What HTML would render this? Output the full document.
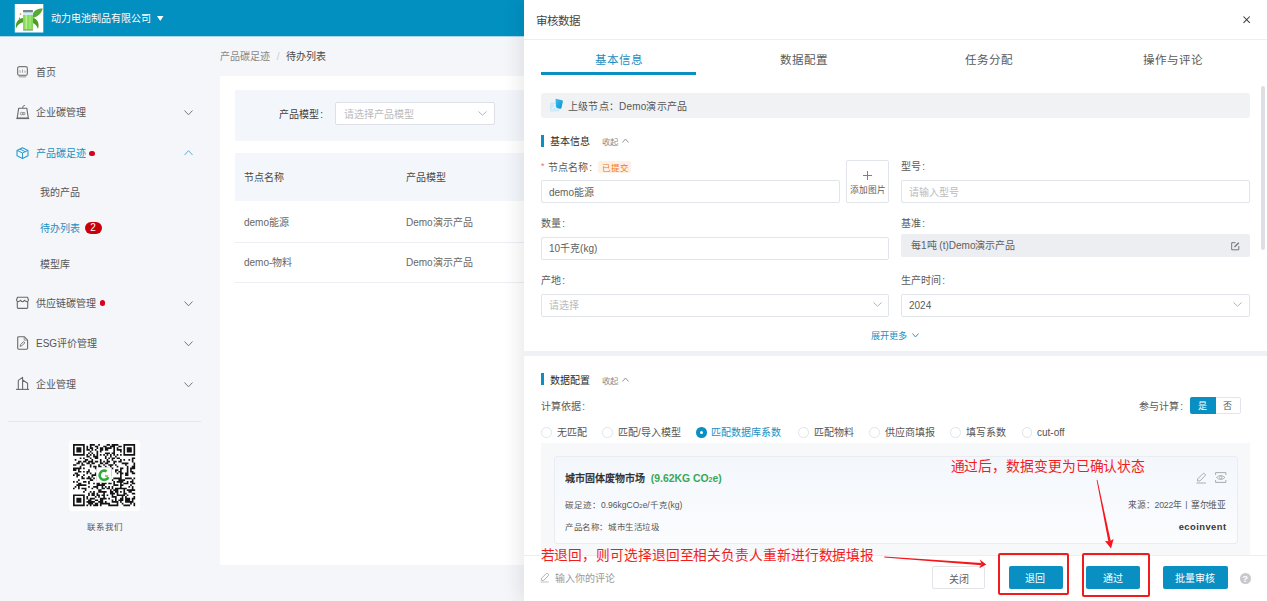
<!DOCTYPE html>
<html lang="zh-CN"><head><meta charset="utf-8">
<style>
*{margin:0;padding:0;box-sizing:border-box}
html,body{width:1267px;height:601px;overflow:hidden;background:#f5f6f9;font-family:"Liberation Sans",sans-serif;color:#333}
.a{position:absolute}
.t{position:absolute;white-space:nowrap;line-height:1;margin-top:1px}
svg{position:absolute;overflow:visible}
</style></head><body>
<!-- header -->
<div class="a" style="left:0;top:0;width:1267px;height:36px;background:#0290c1"></div><div class="a" style="left:0;top:36px;width:1267px;height:1px;background:rgba(2,144,193,0.3)"></div>

<div class="t" style="left:51px;top:13px;font-size:10px;color:#fff">动力电池制品有限公司</div>

<!-- sidebar -->
<div class="t" style="left:36px;top:67px;font-size:10px;color:#555">首页</div>
<div class="t" style="left:36px;top:107px;font-size:10px;color:#555">企业碳管理</div>
<div class="t" style="left:36px;top:148px;font-size:10px;color:#1a8fbf">产品碳足迹</div>
<div class="t" style="left:40px;top:187px;font-size:10px;color:#555">我的产品</div>
<div class="t" style="left:40px;top:223px;font-size:10px;color:#1a8fbf">待办列表</div>
<div class="t" style="left:40px;top:259px;font-size:10px;color:#555">模型库</div>
<div class="t" style="left:36px;top:298px;font-size:10px;color:#555">供应链碳管理</div>
<div class="t" style="left:36px;top:338px;font-size:10px;color:#555">ESG评价管理</div>
<div class="t" style="left:36px;top:379px;font-size:10px;color:#555">企业管理</div>
<div class="a" style="left:8px;top:421px;width:193px;height:1px;background:#e4e6ea"></div>
<div class="a" style="left:69px;top:440px;width:71px;height:71px;background:#fff;border-radius:3px"></div>
<div class="t" style="left:87px;top:522px;font-size:8.5px;color:#555">联系我们</div>

<!-- main -->
<div class="t" style="left:220px;top:51px;font-size:10px;color:#888">产品碳足迹 <span style="color:#ccc;margin:0 4px">/</span> <span style="color:#4a4a4a">待办列表</span></div>
<div class="a" style="left:220px;top:76px;width:304px;height:489px;background:#fff"></div>
<div class="a" style="left:235px;top:90px;width:289px;height:51px;background:#f3f6fb"></div>
<div class="t" style="left:279px;top:109px;font-size:10px;color:#404040">产品模型<span style="margin-left:1.2px">:</span></div>
<div class="a" style="left:335px;top:102px;width:160px;height:23px;background:#fff;border:1px solid #dde0e6;border-radius:2px"></div>
<div class="t" style="left:344px;top:109px;font-size:10px;color:#bbb">请选择产品模型</div>
<div class="a" style="left:235px;top:153px;width:289px;height:48px;background:#f3f6fb"></div>
<div class="t" style="left:244px;top:172px;font-size:10px;color:#4a4a4a">节点名称</div>
<div class="t" style="left:406px;top:172px;font-size:10px;color:#4a4a4a">产品模型</div>
<div class="t" style="left:244px;top:217px;font-size:10px;color:#666">demo能源</div>
<div class="t" style="left:406px;top:217px;font-size:10px;color:#666">Demo演示产品</div>
<div class="a" style="left:235px;top:242px;width:289px;height:1px;background:#ebeef2"></div>
<div class="t" style="left:244px;top:257px;font-size:10px;color:#666">demo-物料</div>
<div class="t" style="left:406px;top:257px;font-size:10px;color:#666">Demo演示产品</div>
<div class="a" style="left:235px;top:282px;width:289px;height:1px;background:#ebeef2"></div>


<!-- icons -->
<svg style="left:14px;top:4px" width="30" height="29" viewBox="0 0 30 29">
<rect x="0.8" y="0" width="28.5" height="28.5" fill="#fff"/>
<path d="M18.5 11.5 C19.5 6 24 4.5 28.8 4.5 C27.5 9.5 23.5 13 18.5 14Z" fill="#58a935"/>
<path d="M2 24.5 C1 18.5 4.5 14 9.5 14 L9.5 18.5 C6 18.5 3.5 21 2 24.5Z" fill="#4c9a2a"/>
<path d="M18.5 14 C23 14.5 26 19 24 25 C23 21.5 21 19.5 18.5 19Z" fill="#4c9a2a"/>
<rect x="9" y="6.5" width="10" height="20" rx="1" fill="#86dc5a"/>
<rect x="9" y="8" width="10" height="3" fill="#cfeef5"/>
<rect x="11.5" y="11" width="1.6" height="15" fill="#b9f08f"/>
<rect x="15.5" y="11" width="1.2" height="15" fill="#a8e67f"/>
<rect x="9" y="6" width="10" height="2.2" rx="0.8" fill="#7d8387"/>
<rect x="9" y="25" width="10" height="1.6" rx="0.6" fill="#9aa0a4"/>
<circle cx="6.5" cy="10" r="0.9" fill="#f3a552"/>
<circle cx="5.5" cy="14.3" r="0.7" fill="#e35a5a"/>
</svg>
<svg style="left:157px;top:16px" width="6.5" height="5"><path d="M0 0H6.5L3.25 5Z" fill="#fff"/></svg>

<!-- sidebar icons -->
<svg style="left:17px;top:66px" width="11" height="12" viewBox="0 0 11 12"><rect x="0.6" y="0.6" width="9.8" height="8.8" rx="1.8" fill="none" stroke="#7a7a7a" stroke-width="1.2"/><path d="M1.5 9.8H9.5L9 11.6H2Z" fill="#b5b5b5"/><path d="M3 4.2v2.6M5.5 3.6v3.2M8 4.6v2.2" stroke="#999" stroke-width="0.9"/></svg>
<svg style="left:16px;top:104px" width="14" height="16" viewBox="0 0 14 16"><path d="M2.7 4.2H10.8L12.3 14H1.2Z" fill="none" stroke="#6a6a6a" stroke-width="1.1" stroke-linejoin="round"/><path d="M0.3 14.5H13.2" stroke="#6a6a6a" stroke-width="1.2"/><path d="M6.8 4.2V2.4L8.9 1.3" fill="none" stroke="#6a6a6a" stroke-width="0.9"/><circle cx="5.6" cy="9.6" r="1.3" fill="none" stroke="#777" stroke-width="0.8"/><circle cx="7.9" cy="9.6" r="1.2" fill="none" stroke="#777" stroke-width="0.8"/></svg>
<svg style="left:16px;top:147px" width="13" height="12" viewBox="0 0 13 12"><path d="M6.5 0.7L12 3.4V8.8L6.5 11.4L1 8.8V3.4Z" fill="none" stroke="#2a9bd0" stroke-width="1.1" stroke-linejoin="round"/><path d="M1 3.4L6.5 6L12 3.4M6.5 6V11.4M3.8 2L9.3 4.7" fill="none" stroke="#2a9bd0" stroke-width="1"/></svg>
<svg style="left:13px;top:293px" width="20" height="20" viewBox="0 0 20 20"><path d="M3.4 7.2L4.5 4.3H14.5L15.6 7.2" fill="none" stroke="#6a6a6a" stroke-width="1.1" stroke-linejoin="round"/><path d="M3.4 7.2Q4.8 10 7.5 7.4Q9.5 10 11.5 7.4Q14.2 10 15.6 7.2" fill="none" stroke="#6a6a6a" stroke-width="1.1"/><path d="M4.3 8.8V14.6Q4.3 15.4 5.1 15.4H13.9Q14.7 15.4 14.7 14.6V8.8" fill="none" stroke="#6a6a6a" stroke-width="1.1"/></svg>
<svg style="left:13px;top:333px" width="20" height="20" viewBox="0 0 20 20"><path d="M4.7 4.6Q4.7 3.7 5.6 3.7H11.2L14.6 7.1V15.3Q14.6 16.2 13.7 16.2H5.6Q4.7 16.2 4.7 15.3Z" fill="none" stroke="#6a6a6a" stroke-width="1.1" stroke-linejoin="round"/><path d="M11.2 3.9V7.1H14.4" fill="none" stroke="#888" stroke-width="0.9"/><path d="M7.2 13.3L7.6 11.6L10.6 8.6L11.8 9.8L8.8 12.8Z" fill="none" stroke="#6a6a6a" stroke-width="0.9" stroke-linejoin="round"/></svg>
<svg style="left:13px;top:373px" width="20" height="20" viewBox="0 0 20 20"><path d="M3 16.4H16" stroke="#6a6a6a" stroke-width="1.1"/><path d="M5.3 16.2V7.4L9.6 4.4V16.2M9.6 7L14.6 10.2V16.2" fill="none" stroke="#6a6a6a" stroke-width="1.1" stroke-linejoin="round"/></svg>
<!-- chevrons -->
<svg style="left:183.5px;top:110px" width="9" height="5.5"><path d="M0.5 0.5L4.5 4.8L8.5 0.5" fill="none" stroke="#777" stroke-width="1"/></svg>
<svg style="left:183.5px;top:150px" width="9" height="5.5"><path d="M0.5 5L4.5 0.7L8.5 5" fill="none" stroke="#5aaed6" stroke-width="1"/></svg>
<svg style="left:183.5px;top:300.5px" width="9" height="5.5"><path d="M0.5 0.5L4.5 4.8L8.5 0.5" fill="none" stroke="#777" stroke-width="1"/></svg>
<svg style="left:183.5px;top:341px" width="9" height="5.5"><path d="M0.5 0.5L4.5 4.8L8.5 0.5" fill="none" stroke="#777" stroke-width="1"/></svg>
<svg style="left:183.5px;top:382px" width="9" height="5.5"><path d="M0.5 0.5L4.5 4.8L8.5 0.5" fill="none" stroke="#777" stroke-width="1"/></svg>
<div class="a" style="left:89px;top:150.5px;width:5.5px;height:5.5px;border-radius:50%;background:#d9001b"></div>
<div class="a" style="left:99.5px;top:300px;width:5.5px;height:5.5px;border-radius:50%;background:#d9001b"></div>
<div class="a" style="left:84.5px;top:221.5px;width:17.5px;height:12px;border-radius:6px;background:#c8000a"></div>
<div class="t" style="left:90.3px;top:222.3px;font-size:10px;color:#fff">2</div>
<svg style="left:73.2px;top:444.2px" width="63" height="63"><path d="M0.00 0.00h11.76v1.68h-11.76zM16.80 0.00h5.04v1.68h-5.04zM25.20 0.00h1.68v1.68h-1.68zM33.60 0.00h3.36v1.68h-3.36zM38.64 0.00h6.72v1.68h-6.72zM50.40 0.00h11.76v1.68h-11.76zM0.00 1.68h1.68v1.68h-1.68zM10.08 1.68h1.68v1.68h-1.68zM13.44 1.68h1.68v1.68h-1.68zM16.80 1.68h1.68v1.68h-1.68zM21.84 1.68h3.36v1.68h-3.36zM30.24 1.68h3.36v1.68h-3.36zM36.96 1.68h5.04v1.68h-5.04zM45.36 1.68h3.36v1.68h-3.36zM50.40 1.68h1.68v1.68h-1.68zM60.48 1.68h1.68v1.68h-1.68zM0.00 3.36h1.68v1.68h-1.68zM3.36 3.36h5.04v1.68h-5.04zM10.08 3.36h1.68v1.68h-1.68zM13.44 3.36h1.68v1.68h-1.68zM16.80 3.36h3.36v1.68h-3.36zM23.52 3.36h1.68v1.68h-1.68zM26.88 3.36h3.36v1.68h-3.36zM31.92 3.36h6.72v1.68h-6.72zM40.32 3.36h1.68v1.68h-1.68zM43.68 3.36h1.68v1.68h-1.68zM50.40 3.36h1.68v1.68h-1.68zM53.76 3.36h5.04v1.68h-5.04zM60.48 3.36h1.68v1.68h-1.68zM0.00 5.04h1.68v1.68h-1.68zM3.36 5.04h5.04v1.68h-5.04zM10.08 5.04h1.68v1.68h-1.68zM13.44 5.04h3.36v1.68h-3.36zM18.48 5.04h1.68v1.68h-1.68zM21.84 5.04h1.68v1.68h-1.68zM26.88 5.04h3.36v1.68h-3.36zM31.92 5.04h3.36v1.68h-3.36zM40.32 5.04h1.68v1.68h-1.68zM43.68 5.04h5.04v1.68h-5.04zM50.40 5.04h1.68v1.68h-1.68zM53.76 5.04h5.04v1.68h-5.04zM60.48 5.04h1.68v1.68h-1.68zM0.00 6.72h1.68v1.68h-1.68zM3.36 6.72h5.04v1.68h-5.04zM10.08 6.72h1.68v1.68h-1.68zM16.80 6.72h1.68v1.68h-1.68zM23.52 6.72h1.68v1.68h-1.68zM26.88 6.72h1.68v1.68h-1.68zM40.32 6.72h1.68v1.68h-1.68zM47.04 6.72h1.68v1.68h-1.68zM50.40 6.72h1.68v1.68h-1.68zM53.76 6.72h5.04v1.68h-5.04zM60.48 6.72h1.68v1.68h-1.68zM0.00 8.40h1.68v1.68h-1.68zM10.08 8.40h1.68v1.68h-1.68zM15.12 8.40h1.68v1.68h-1.68zM18.48 8.40h1.68v1.68h-1.68zM23.52 8.40h1.68v1.68h-1.68zM31.92 8.40h5.04v1.68h-5.04zM38.64 8.40h3.36v1.68h-3.36zM50.40 8.40h1.68v1.68h-1.68zM60.48 8.40h1.68v1.68h-1.68zM0.00 10.08h11.76v1.68h-11.76zM13.44 10.08h1.68v1.68h-1.68zM16.80 10.08h1.68v1.68h-1.68zM20.16 10.08h1.68v1.68h-1.68zM23.52 10.08h1.68v1.68h-1.68zM26.88 10.08h1.68v1.68h-1.68zM30.24 10.08h1.68v1.68h-1.68zM33.60 10.08h1.68v1.68h-1.68zM36.96 10.08h1.68v1.68h-1.68zM40.32 10.08h1.68v1.68h-1.68zM43.68 10.08h1.68v1.68h-1.68zM47.04 10.08h1.68v1.68h-1.68zM50.40 10.08h11.76v1.68h-11.76zM13.44 11.76h3.36v1.68h-3.36zM20.16 11.76h5.04v1.68h-5.04zM31.92 11.76h1.68v1.68h-1.68zM36.96 11.76h1.68v1.68h-1.68zM42.00 11.76h1.68v1.68h-1.68zM6.72 13.44h1.68v1.68h-1.68zM10.08 13.44h1.68v1.68h-1.68zM16.80 13.44h1.68v1.68h-1.68zM21.84 13.44h3.36v1.68h-3.36zM31.92 13.44h1.68v1.68h-1.68zM35.28 13.44h1.68v1.68h-1.68zM38.64 13.44h3.36v1.68h-3.36zM43.68 13.44h3.36v1.68h-3.36zM58.80 13.44h3.36v1.68h-3.36zM1.68 15.12h1.68v1.68h-1.68zM11.76 15.12h3.36v1.68h-3.36zM18.48 15.12h1.68v1.68h-1.68zM26.88 15.12h1.68v1.68h-1.68zM33.60 15.12h1.68v1.68h-1.68zM38.64 15.12h1.68v1.68h-1.68zM47.04 15.12h1.68v1.68h-1.68zM50.40 15.12h1.68v1.68h-1.68zM55.44 15.12h1.68v1.68h-1.68zM58.80 15.12h1.68v1.68h-1.68zM5.04 16.80h3.36v1.68h-3.36zM10.08 16.80h3.36v1.68h-3.36zM15.12 16.80h5.04v1.68h-5.04zM21.84 16.80h3.36v1.68h-3.36zM26.88 16.80h1.68v1.68h-1.68zM30.24 16.80h1.68v1.68h-1.68zM33.60 16.80h3.36v1.68h-3.36zM40.32 16.80h3.36v1.68h-3.36zM45.36 16.80h3.36v1.68h-3.36zM58.80 16.80h1.68v1.68h-1.68zM3.36 18.48h3.36v1.68h-3.36zM8.40 18.48h1.68v1.68h-1.68zM13.44 18.48h3.36v1.68h-3.36zM18.48 18.48h3.36v1.68h-3.36zM26.88 18.48h3.36v1.68h-3.36zM31.92 18.48h3.36v1.68h-3.36zM40.32 18.48h1.68v1.68h-1.68zM48.72 18.48h6.72v1.68h-6.72zM60.48 18.48h1.68v1.68h-1.68zM0.00 20.16h3.36v1.68h-3.36zM8.40 20.16h3.36v1.68h-3.36zM16.80 20.16h1.68v1.68h-1.68zM25.20 20.16h1.68v1.68h-1.68zM30.24 20.16h1.68v1.68h-1.68zM35.28 20.16h5.04v1.68h-5.04zM42.00 20.16h1.68v1.68h-1.68zM52.08 20.16h1.68v1.68h-1.68zM60.48 20.16h1.68v1.68h-1.68zM6.72 21.84h1.68v1.68h-1.68zM16.80 21.84h1.68v1.68h-1.68zM20.16 21.84h3.36v1.68h-3.36zM25.20 21.84h3.36v1.68h-3.36zM31.92 21.84h1.68v1.68h-1.68zM36.96 21.84h1.68v1.68h-1.68zM43.68 21.84h1.68v1.68h-1.68zM53.76 21.84h1.68v1.68h-1.68zM58.80 21.84h3.36v1.68h-3.36zM0.00 23.52h8.40v1.68h-8.40zM10.08 23.52h1.68v1.68h-1.68zM21.84 23.52h1.68v1.68h-1.68zM26.88 23.52h1.68v1.68h-1.68zM30.24 23.52h1.68v1.68h-1.68zM33.60 23.52h1.68v1.68h-1.68zM38.64 23.52h1.68v1.68h-1.68zM47.04 23.52h3.36v1.68h-3.36zM53.76 23.52h1.68v1.68h-1.68zM57.12 23.52h5.04v1.68h-5.04zM0.00 25.20h3.36v1.68h-3.36zM5.04 25.20h1.68v1.68h-1.68zM15.12 25.20h1.68v1.68h-1.68zM23.52 25.20h1.68v1.68h-1.68zM36.96 25.20h1.68v1.68h-1.68zM42.00 25.20h3.36v1.68h-3.36zM47.04 25.20h1.68v1.68h-1.68zM53.76 25.20h1.68v1.68h-1.68zM57.12 25.20h1.68v1.68h-1.68zM5.04 26.88h3.36v1.68h-3.36zM10.08 26.88h1.68v1.68h-1.68zM13.44 26.88h3.36v1.68h-3.36zM25.20 26.88h3.36v1.68h-3.36zM33.60 26.88h5.04v1.68h-5.04zM42.00 26.88h1.68v1.68h-1.68zM45.36 26.88h3.36v1.68h-3.36zM53.76 26.88h1.68v1.68h-1.68zM57.12 26.88h3.36v1.68h-3.36zM1.68 28.56h3.36v1.68h-3.36zM13.44 28.56h1.68v1.68h-1.68zM16.80 28.56h1.68v1.68h-1.68zM21.84 28.56h1.68v1.68h-1.68zM30.24 28.56h3.36v1.68h-3.36zM35.28 28.56h3.36v1.68h-3.36zM43.68 28.56h1.68v1.68h-1.68zM47.04 28.56h3.36v1.68h-3.36zM52.08 28.56h3.36v1.68h-3.36zM58.80 28.56h3.36v1.68h-3.36zM0.00 30.24h1.68v1.68h-1.68zM3.36 30.24h3.36v1.68h-3.36zM10.08 30.24h1.68v1.68h-1.68zM18.48 30.24h5.04v1.68h-5.04zM26.88 30.24h11.76v1.68h-11.76zM47.04 30.24h1.68v1.68h-1.68zM52.08 30.24h3.36v1.68h-3.36zM3.36 31.92h1.68v1.68h-1.68zM8.40 31.92h1.68v1.68h-1.68zM15.12 31.92h1.68v1.68h-1.68zM18.48 31.92h1.68v1.68h-1.68zM23.52 31.92h3.36v1.68h-3.36zM31.92 31.92h3.36v1.68h-3.36zM47.04 31.92h1.68v1.68h-1.68zM8.40 33.60h3.36v1.68h-3.36zM13.44 33.60h5.04v1.68h-5.04zM20.16 33.60h1.68v1.68h-1.68zM23.52 33.60h5.04v1.68h-5.04zM31.92 33.60h3.36v1.68h-3.36zM40.32 33.60h8.40v1.68h-8.40zM52.08 33.60h6.72v1.68h-6.72zM60.48 33.60h1.68v1.68h-1.68zM5.04 35.28h1.68v1.68h-1.68zM16.80 35.28h3.36v1.68h-3.36zM23.52 35.28h1.68v1.68h-1.68zM28.56 35.28h1.68v1.68h-1.68zM33.60 35.28h3.36v1.68h-3.36zM38.64 35.28h1.68v1.68h-1.68zM45.36 35.28h6.72v1.68h-6.72zM58.80 35.28h1.68v1.68h-1.68zM0.00 36.96h1.68v1.68h-1.68zM3.36 36.96h1.68v1.68h-1.68zM10.08 36.96h3.36v1.68h-3.36zM15.12 36.96h1.68v1.68h-1.68zM25.20 36.96h1.68v1.68h-1.68zM28.56 36.96h1.68v1.68h-1.68zM31.92 36.96h1.68v1.68h-1.68zM35.28 36.96h1.68v1.68h-1.68zM40.32 36.96h1.68v1.68h-1.68zM43.68 36.96h6.72v1.68h-6.72zM53.76 36.96h1.68v1.68h-1.68zM57.12 36.96h3.36v1.68h-3.36zM5.04 38.64h3.36v1.68h-3.36zM15.12 38.64h1.68v1.68h-1.68zM20.16 38.64h1.68v1.68h-1.68zM23.52 38.64h3.36v1.68h-3.36zM28.56 38.64h5.04v1.68h-5.04zM35.28 38.64h3.36v1.68h-3.36zM40.32 38.64h1.68v1.68h-1.68zM47.04 38.64h1.68v1.68h-1.68zM50.40 38.64h5.04v1.68h-5.04zM58.80 38.64h3.36v1.68h-3.36zM3.36 40.32h10.08v1.68h-10.08zM23.52 40.32h8.40v1.68h-8.40zM40.32 40.32h5.04v1.68h-5.04zM47.04 40.32h3.36v1.68h-3.36zM57.12 40.32h1.68v1.68h-1.68zM1.68 42.00h1.68v1.68h-1.68zM5.04 42.00h1.68v1.68h-1.68zM15.12 42.00h1.68v1.68h-1.68zM20.16 42.00h5.04v1.68h-5.04zM28.56 42.00h1.68v1.68h-1.68zM31.92 42.00h1.68v1.68h-1.68zM35.28 42.00h1.68v1.68h-1.68zM38.64 42.00h1.68v1.68h-1.68zM47.04 42.00h1.68v1.68h-1.68zM55.44 42.00h1.68v1.68h-1.68zM58.80 42.00h1.68v1.68h-1.68zM0.00 43.68h1.68v1.68h-1.68zM5.04 43.68h1.68v1.68h-1.68zM8.40 43.68h5.04v1.68h-5.04zM18.48 43.68h1.68v1.68h-1.68zM23.52 43.68h1.68v1.68h-1.68zM28.56 43.68h3.36v1.68h-3.36zM33.60 43.68h3.36v1.68h-3.36zM38.64 43.68h1.68v1.68h-1.68zM42.00 43.68h11.76v1.68h-11.76zM58.80 43.68h1.68v1.68h-1.68zM11.76 45.36h1.68v1.68h-1.68zM25.20 45.36h3.36v1.68h-3.36zM36.96 45.36h1.68v1.68h-1.68zM40.32 45.36h5.04v1.68h-5.04zM50.40 45.36h1.68v1.68h-1.68zM53.76 45.36h8.40v1.68h-8.40zM10.08 47.04h1.68v1.68h-1.68zM16.80 47.04h1.68v1.68h-1.68zM20.16 47.04h1.68v1.68h-1.68zM25.20 47.04h8.40v1.68h-8.40zM36.96 47.04h3.36v1.68h-3.36zM42.00 47.04h3.36v1.68h-3.36zM47.04 47.04h1.68v1.68h-1.68zM50.40 47.04h1.68v1.68h-1.68zM55.44 47.04h3.36v1.68h-3.36zM15.12 48.72h1.68v1.68h-1.68zM18.48 48.72h3.36v1.68h-3.36zM23.52 48.72h1.68v1.68h-1.68zM30.24 48.72h1.68v1.68h-1.68zM36.96 48.72h5.04v1.68h-5.04zM43.68 48.72h1.68v1.68h-1.68zM50.40 48.72h3.36v1.68h-3.36zM58.80 48.72h3.36v1.68h-3.36zM0.00 50.40h11.76v1.68h-11.76zM15.12 50.40h1.68v1.68h-1.68zM18.48 50.40h3.36v1.68h-3.36zM23.52 50.40h3.36v1.68h-3.36zM28.56 50.40h3.36v1.68h-3.36zM33.60 50.40h1.68v1.68h-1.68zM38.64 50.40h1.68v1.68h-1.68zM43.68 50.40h8.40v1.68h-8.40zM53.76 50.40h1.68v1.68h-1.68zM0.00 52.08h1.68v1.68h-1.68zM10.08 52.08h1.68v1.68h-1.68zM13.44 52.08h1.68v1.68h-1.68zM21.84 52.08h1.68v1.68h-1.68zM25.20 52.08h1.68v1.68h-1.68zM30.24 52.08h1.68v1.68h-1.68zM38.64 52.08h5.04v1.68h-5.04zM48.72 52.08h1.68v1.68h-1.68zM52.08 52.08h1.68v1.68h-1.68zM60.48 52.08h1.68v1.68h-1.68zM0.00 53.76h1.68v1.68h-1.68zM3.36 53.76h5.04v1.68h-5.04zM10.08 53.76h1.68v1.68h-1.68zM13.44 53.76h1.68v1.68h-1.68zM16.80 53.76h5.04v1.68h-5.04zM26.88 53.76h6.72v1.68h-6.72zM35.28 53.76h1.68v1.68h-1.68zM42.00 53.76h1.68v1.68h-1.68zM47.04 53.76h3.36v1.68h-3.36zM52.08 53.76h5.04v1.68h-5.04zM58.80 53.76h3.36v1.68h-3.36zM0.00 55.44h1.68v1.68h-1.68zM3.36 55.44h5.04v1.68h-5.04zM10.08 55.44h1.68v1.68h-1.68zM15.12 55.44h3.36v1.68h-3.36zM21.84 55.44h3.36v1.68h-3.36zM26.88 55.44h3.36v1.68h-3.36zM38.64 55.44h1.68v1.68h-1.68zM42.00 55.44h1.68v1.68h-1.68zM45.36 55.44h5.04v1.68h-5.04zM52.08 55.44h5.04v1.68h-5.04zM58.80 55.44h1.68v1.68h-1.68zM0.00 57.12h1.68v1.68h-1.68zM3.36 57.12h5.04v1.68h-5.04zM10.08 57.12h1.68v1.68h-1.68zM13.44 57.12h8.40v1.68h-8.40zM25.20 57.12h5.04v1.68h-5.04zM31.92 57.12h1.68v1.68h-1.68zM38.64 57.12h6.72v1.68h-6.72zM47.04 57.12h1.68v1.68h-1.68zM52.08 57.12h8.40v1.68h-8.40zM0.00 58.80h1.68v1.68h-1.68zM10.08 58.80h1.68v1.68h-1.68zM15.12 58.80h5.04v1.68h-5.04zM21.84 58.80h3.36v1.68h-3.36zM26.88 58.80h10.08v1.68h-10.08zM43.68 58.80h1.68v1.68h-1.68zM48.72 58.80h1.68v1.68h-1.68zM57.12 58.80h1.68v1.68h-1.68zM60.48 58.80h1.68v1.68h-1.68zM0.00 60.48h11.76v1.68h-11.76zM13.44 60.48h1.68v1.68h-1.68zM16.80 60.48h1.68v1.68h-1.68zM20.16 60.48h5.04v1.68h-5.04zM26.88 60.48h1.68v1.68h-1.68zM35.28 60.48h10.08v1.68h-10.08zM50.40 60.48h6.72v1.68h-6.72zM60.48 60.48h1.68v1.68h-1.68z" fill="#151515"/></svg>
<svg style="left:96px;top:467px" width="16" height="16" viewBox="0 0 16 16"><rect x="0.5" y="0.5" width="15" height="15" rx="2" fill="#fff" stroke="#e6e6e6" stroke-width="0.6"/><path d="M10.6 4.3A4.6 4.6 0 1 0 12.4 10.2" fill="none" stroke="#2eaa3c" stroke-width="2.6"/><path d="M9 8.8L12.2 9.2" stroke="#8fd14f" stroke-width="2"/></svg>
<!-- main select chevron -->
<svg style="left:478px;top:111px" width="9" height="5"><path d="M0.5 0.5L4.5 4.2L8.5 0.5" fill="none" stroke="#aaa" stroke-width="0.9"/></svg>
<!-- drawer -->
<div class="a" style="left:524px;top:0;width:743px;height:601px;background:#fff;box-shadow:-6px 0 16px rgba(0,0,0,.08)"></div>
<div class="t" style="left:536px;top:15px;font-size:11.5px;color:#444">审核数据</div>
<div class="a" style="left:524px;top:39px;width:743px;height:1px;background:#eceef1"></div>


<div class="a" style="left:1261px;top:86px;width:4px;height:164px;background:#dcdfe3;border-radius:2px"></div>
<svg style="left:1242.8px;top:15.8px" width="8" height="8"><path d="M0.5 0.5L6.8 6.8M6.8 0.5L0.5 6.8" stroke="#3a3a3a" stroke-width="1.05"/></svg>
<!-- tabs -->
<div class="t" style="left:595px;top:54.2px;font-size:11.55px;color:#1a8fbf">基本信息</div>
<div class="t" style="left:780px;top:54.2px;font-size:11.55px;color:#5a5a5a">数据配置</div>
<div class="t" style="left:965px;top:54.2px;font-size:11.55px;color:#5a5a5a">任务分配</div>
<div class="t" style="left:1143px;top:54.2px;font-size:11.55px;color:#5a5a5a">操作与评论</div>
<div class="a" style="left:541px;top:72px;width:155px;height:2.5px;background:#0a8fc2"></div>
<!-- parent bar -->
<div class="a" style="left:541px;top:93px;width:709px;height:25px;background:#f1f2f4;border-radius:3px"></div>
<div class="t" style="left:568px;top:101px;font-size:10px;letter-spacing:0.2px;color:#555">上级节点：Demo演示产品</div>
<!-- section 1 -->
<div class="a" style="left:541px;top:135px;width:3px;height:12px;background:#0a8fc2"></div>
<div class="t" style="left:550px;top:136px;font-size:10px;color:#2a2a2a;font-weight:500">基本信息</div>
<div class="t" style="left:602px;top:137px;font-size:8.4px;color:#888">收起</div>
<svg style="left:622px;top:138px" width="7" height="5"><path d="M0.5 4.5L3.5 1L6.5 4.5" fill="none" stroke="#888" stroke-width="0.9"/></svg>
<div class="t" style="left:541px;top:161px;font-size:9px;color:#f56c6c">*</div>
<div class="t" style="left:548px;top:162px;font-size:10px;color:#5a5a5a">节点名称<span style="margin-left:1.2px">:</span></div>
<div class="a" style="left:598px;top:161px;width:33px;height:12px;background:#fdf0e6;border-radius:2px"></div>
<div class="t" style="left:602px;top:163px;font-size:8.5px;color:#f0781e">已提交</div>
<div class="a" style="left:541px;top:180px;width:299px;height:23px;border:1px solid #e1e4e9;border-radius:2px"></div>
<div class="t" style="left:549px;top:187px;font-size:10px;color:#606060">demo能源</div>
<div class="a" style="left:846px;top:160px;width:43px;height:43px;border:1px solid #e1e4e9;border-radius:2px"></div>
<svg style="left:863px;top:171px" width="9" height="9"><path d="M4.5 0V9M0 4.5H9" stroke="#2a9bd0" stroke-width="1"/></svg>
<div class="t" style="left:850px;top:185px;font-size:8.7px;color:#606060">添加图片</div>
<div class="t" style="left:901px;top:161px;font-size:10px;color:#5a5a5a">型号<span style="margin-left:1.2px">:</span></div>
<div class="a" style="left:901px;top:180px;width:349px;height:23px;border:1px solid #e1e4e9;border-radius:2px"></div>
<div class="t" style="left:909px;top:187px;font-size:10px;color:#bbb">请输入型号</div>
<div class="t" style="left:541px;top:218px;font-size:10px;color:#5a5a5a">数量<span style="margin-left:1.2px">:</span></div>
<div class="a" style="left:541px;top:237px;width:348px;height:22.5px;border:1px solid #e1e4e9;border-radius:2px"></div>
<div class="t" style="left:549px;top:243px;font-size:10px;color:#606060">10千克(kg)</div>
<div class="t" style="left:901px;top:218px;font-size:10px;color:#5a5a5a">基准<span style="margin-left:1.2px">:</span></div>
<div class="a" style="left:901px;top:234px;width:349px;height:23px;background:#eceef1;border-radius:2px"></div>
<div class="t" style="left:911px;top:240px;font-size:10px;color:#606060">每1吨 (t)Demo演示产品</div>
<div class="t" style="left:541px;top:275px;font-size:10px;color:#5a5a5a">产地<span style="margin-left:1.2px">:</span></div>
<div class="a" style="left:541px;top:293.5px;width:348px;height:23px;border:1px solid #e1e4e9;border-radius:2px"></div>
<div class="t" style="left:549px;top:300px;font-size:10px;color:#bbb">请选择</div>
<svg style="left:873px;top:302px" width="9" height="5"><path d="M0.5 0.5L4.5 4.2L8.5 0.5" fill="none" stroke="#aaa" stroke-width="0.9"/></svg>
<div class="t" style="left:901px;top:275px;font-size:10px;color:#5a5a5a">生产时间<span style="margin-left:1.2px">:</span></div>
<div class="a" style="left:901px;top:293.5px;width:349px;height:23px;border:1px solid #e1e4e9;border-radius:2px"></div>
<div class="t" style="left:909px;top:300px;font-size:10px;color:#606060">2024</div>
<svg style="left:1233px;top:302px" width="9" height="5"><path d="M0.5 0.5L4.5 4.2L8.5 0.5" fill="none" stroke="#aaa" stroke-width="0.9"/></svg>
<div class="t" style="left:870.5px;top:331px;font-size:9.2px;color:#1a8fbf">展开更多</div>
<svg style="left:912px;top:333px" width="7" height="5"><path d="M0.5 0.5L3.5 4L6.5 0.5" fill="none" stroke="#1a8fbf" stroke-width="0.9"/></svg>
<!-- band -->
<div class="a" style="left:524px;top:351px;width:743px;height:5px;background:#f0f1f4"></div>
<!-- section 2 -->
<div class="a" style="left:541px;top:373px;width:3px;height:12px;background:#0a8fc2"></div>
<div class="t" style="left:550px;top:375px;font-size:10px;color:#2a2a2a;font-weight:500">数据配置</div>
<div class="t" style="left:602px;top:376px;font-size:8.4px;color:#888">收起</div>
<svg style="left:622px;top:377px" width="7" height="5"><path d="M0.5 4.5L3.5 1L6.5 4.5" fill="none" stroke="#888" stroke-width="0.9"/></svg>
<div class="t" style="left:541px;top:401px;font-size:10px;color:#5a5a5a">计算依据<span style="margin-left:1.2px">:</span></div>
<div class="t" style="left:1139px;top:401px;font-size:10px;color:#5a5a5a">参与计算<span style="margin-left:1.2px">:</span></div>
<div class="a" style="left:1190px;top:397px;width:50.5px;height:17px;border:1px solid #e1e4e9;border-radius:2px;background:#fff"></div>
<div class="a" style="left:1190px;top:397px;width:25.5px;height:17px;background:#0a8fc2;border-radius:2px 0 0 2px"></div>
<div class="t" style="left:1198px;top:401px;font-size:9px;color:#fff">是</div>
<div class="t" style="left:1223px;top:401px;font-size:9px;color:#555">否</div>
<div class="a" style="left:541px;top:427px;width:10.5px;height:10.5px;border-radius:50%;border:1px solid #e1e4e9;background:#fff"></div>
<div class="t" style="left:557px;top:427px;font-size:10px;color:#555">无匹配</div>
<div class="a" style="left:602px;top:427px;width:10.5px;height:10.5px;border-radius:50%;border:1px solid #e1e4e9;background:#fff"></div>
<div class="t" style="left:618px;top:427px;font-size:10px;color:#555">匹配/导入模型</div>
<div class="a" style="left:696px;top:427px;width:10.5px;height:10.5px;border-radius:50%;background:#0a8fc2"></div><div class="a" style="left:699.5px;top:430.5px;width:3.5px;height:3.5px;border-radius:50%;background:#fff"></div>
<div class="t" style="left:711px;top:427px;font-size:10px;color:#1a8fbf">匹配数据库系数</div>
<div class="a" style="left:798px;top:427px;width:10.5px;height:10.5px;border-radius:50%;border:1px solid #e1e4e9;background:#fff"></div>
<div class="t" style="left:814px;top:427px;font-size:10px;color:#555">匹配物料</div>
<div class="a" style="left:869px;top:427px;width:10.5px;height:10.5px;border-radius:50%;border:1px solid #e1e4e9;background:#fff"></div>
<div class="t" style="left:885px;top:427px;font-size:10px;color:#555">供应商填报</div>
<div class="a" style="left:950px;top:427px;width:10.5px;height:10.5px;border-radius:50%;border:1px solid #e1e4e9;background:#fff"></div>
<div class="t" style="left:966px;top:427px;font-size:10px;color:#555">填写系数</div>
<div class="a" style="left:1021.5px;top:427px;width:10.5px;height:10.5px;border-radius:50%;border:1px solid #e1e4e9;background:#fff"></div>
<div class="t" style="left:1037px;top:427px;font-size:10px;color:#555">cut-off</div>

<div class="a" style="left:541px;top:443px;width:709px;height:112px;background:#f7f8fa"></div>
<div class="a" style="left:553.5px;top:455.5px;width:684px;height:88px;border:1px solid #e9ecf1;border-radius:3px;background:linear-gradient(180deg,#f3f7fc,#fbfcfe)"></div>
<div class="t" style="left:565px;top:473px;font-size:10px;color:#333;font-weight:bold">城市固体废物市场 <span style="color:#3aa757;margin-left:3px;font-size:10.4px">(9.62KG CO<span style="font-size:7px">2</span>e)</span></div>
<div class="t" style="left:565px;top:500px;font-size:8.5px;color:#555">碳足迹：0.96kgCO<span style="font-size:6px">2</span>e/千克(kg)</div>
<div class="t" style="left:565px;top:522px;font-size:8.45px;letter-spacing:0.6px;color:#555">产品名称：城市生活垃圾</div>
<div class="t" style="right:41px;top:500px;font-size:8.75px;letter-spacing:-0.2px;color:#5a5a5a">来源：2022年丨塞尔维亚</div>
<div class="t" style="right:40.5px;top:520.5px;font-size:9.4px;letter-spacing:0.45px;color:#383838;font-weight:bold">ecoinvent</div>
<!-- footer -->
<div class="a" style="left:524px;top:555px;width:743px;height:1px;background:#eceef1"></div>
<div class="t" style="left:555px;top:573px;font-size:10px;color:#999">输入你的评论</div>
<div class="a" style="left:932px;top:566px;width:53px;height:23px;border:1px solid #e2e4e8;border-radius:2px;background:#fff"></div>
<div class="t" style="left:948.5px;top:573.5px;font-size:10px;color:#606060">关闭</div>
<div class="a" style="left:1009px;top:566px;width:54px;height:23px;background:#0a8fc2;border-radius:2px"></div>
<div class="t" style="left:1025px;top:573px;font-size:10px;color:#fff;font-weight:500">退回</div>
<div class="a" style="left:1085.5px;top:566px;width:54.5px;height:23px;background:#0a8fc2;border-radius:2px"></div>
<div class="t" style="left:1102.5px;top:573px;font-size:10px;color:#fff;font-weight:500">通过</div>
<div class="a" style="left:1163px;top:566px;width:65px;height:23px;background:#0a8fc2;border-radius:2px"></div>
<div class="t" style="left:1175px;top:573px;font-size:10px;color:#fff;font-weight:500">批量审核</div>
<div class="a" style="left:1240px;top:573px;width:10.5px;height:10.5px;border-radius:50%;background:#c8c9cc"></div>
<!-- annotations -->
<div class="t" style="left:950.5px;top:458.5px;font-size:13.8px;letter-spacing:-0.1px;color:#f31c1c;font-weight:500">通过后，数据变更为已确认状态</div>
<div class="t" style="left:540.5px;top:548px;font-size:13.7px;letter-spacing:-0.1px;color:#f31c1c;font-weight:500">若退回，则可选择退回至相关负责人重新进行数据填报</div>
<div class="a" style="left:997.5px;top:553px;width:71px;height:42px;border:2px solid #f01c1c;border-radius:2px"></div>
<div class="a" style="left:1081.5px;top:553px;width:68.5px;height:44px;border:2px solid #f01c1c;border-radius:2px"></div>

<svg style="left:549px;top:98px" width="15" height="15" viewBox="0 0 15 15"><defs><linearGradient id="pg" x1="0" y1="0" x2="1" y2="1"><stop offset="0" stop-color="#3cc0f0"/><stop offset="1" stop-color="#0e8fd0"/></linearGradient></defs><rect x="0.8" y="4.5" width="9.5" height="9" rx="1.5" fill="#cdeaf8"/><path d="M6.5 1.8Q6.7 0.6 7.9 0.9L13 2.2Q14.1 2.5 13.9 3.6L12.4 10Q12.1 11 11.1 10.7L8.2 9.9Q7.3 9.6 7.1 8.7Z" fill="url(#pg)"/><path d="M2.8 11.5L5.3 8.5L7.8 11.5" fill="none" stroke="#fff" stroke-width="0.9" opacity="0.8"/><circle cx="5.3" cy="6.8" r="0.8" fill="#fff" opacity="0.7"/></svg>
<svg style="left:1231px;top:242px" width="8.5" height="8.5" viewBox="0 0 8.5 8.5"><path d="M4.5 0.7H0.7V7.8H7.8V4" fill="none" stroke="#777" stroke-width="1"/><path d="M3.5 5L7.8 0.7" stroke="#777" stroke-width="1.4"/></svg>
<svg style="left:1195.5px;top:471.5px" width="11" height="11.5" viewBox="0 0 11 11.5"><path d="M1.5 8.9L1.7 6.9L6.9 1.7Q7.7 0.9 8.5 1.7L9 2.2Q9.8 3 9 3.8L3.8 9Z" fill="none" stroke="#a5a5a5" stroke-width="0.95" stroke-linejoin="round"/><path d="M0.6 11H9.8" stroke="#a5a5a5" stroke-width="0.9"/></svg>
<svg style="left:1215px;top:472px" width="11.5" height="11" viewBox="0 0 11.5 11"><path d="M0.6 3V0.6H10.9V3M0.6 8V10.4H10.9V8" fill="none" stroke="#aaa" stroke-width="1"/><path d="M1.5 5.5Q5.75 1.5 10 5.5Q5.75 9.5 1.5 5.5Z" fill="none" stroke="#aaa" stroke-width="0.9"/><circle cx="5.75" cy="5.5" r="1.3" fill="none" stroke="#aaa" stroke-width="0.9"/></svg>
<svg style="left:540px;top:572px" width="10" height="10.5" viewBox="0 0 10 10.5"><path d="M1.3 8.2L1.5 6.3L6.2 1.6Q7 0.8 7.8 1.6L8.3 2.1Q9.1 2.9 8.3 3.7L3.6 8.4Z" fill="none" stroke="#a8a8a8" stroke-width="0.9" stroke-linejoin="round"/><path d="M0.6 10H8.7" stroke="#b0b0b0" stroke-width="0.8"/></svg>
<div class="t" style="left:1242.3px;top:573.3px;font-size:9.5px;color:#fff;font-weight:bold">?</div>
<svg style="left:0;top:0" width="1267" height="601">
<path d="M1097.4 479.7L1110.8 541.3L1108.4 541.7L1096.6 479.9Z" fill="#f5161b"/>
<path d="M1111 548.6L1113.6 539L1109.6 541.3L1105 540.9Z" fill="#f5161b"/>
<path d="M884.3 556.6L981.6 562.9L981.4 565.3L884.3 557.5Z" fill="#f5161b"/>
<path d="M986.3 564.4L979.8 559.6L981.5 564.1L979.2 568.3Z" fill="#f5161b"/>
</svg>
</body></html>
